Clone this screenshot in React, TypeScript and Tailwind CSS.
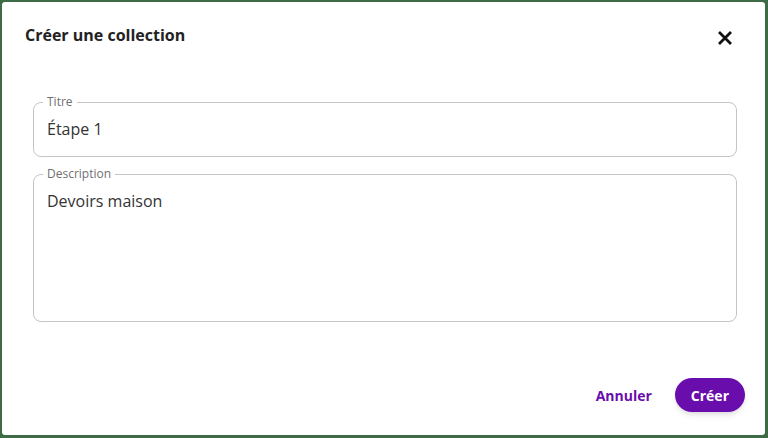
import React from 'react';

interface OutlinedFieldProps {
  label: string;
  value: string;
  bodyClass: string;
}

const OutlinedField: React.FC<OutlinedFieldProps> = ({ label, value, bodyClass }) => {
  return (
    <fieldset className="border border-[#c4c4c4] rounded-lg pl-[9px] pr-[13px] m-0">
      <legend className="px-[4px] text-[12px] leading-4 text-[#707070]">{label}</legend>
      <div className={`pl-[4px] pt-[7px] text-[16px] leading-6 text-[#333333] ${bodyClass}`}>{value}</div>
    </fieldset>
  );
};

const CloseIcon = () => (
  <svg width="16" height="16" viewBox="0 0 16 16" aria-hidden="true">
    <path d="M2 2 14 14M14 2 2 14" stroke="#111111" strokeWidth="2.8" fill="none" />
  </svg>
);

const App: React.FC = () => {
  return (
    <div
      className="w-[768px] h-[438px] bg-[#3d6b45] pt-[2px] pl-[2px] pr-[3px] pb-[3px]"
      style={{ fontFamily: '"Open Sans", "Noto Sans", sans-serif' }}
    >
      <div className="h-full bg-white rounded-[3px] flex flex-col">
        {/* Header */}
        <div className="flex items-start justify-between pl-[23px] pr-[32px] pt-[21px]">
          <h2 className="text-[16px] leading-6 font-bold text-[#222222]">Créer une collection</h2>
          <button className="mt-[7px]" aria-label="Fermer">
            <CloseIcon />
          </button>
        </div>

        {/* Form */}
        <div className="flex flex-col gap-[9px] pl-[31px] pr-[28px] mt-[47px]">
          <OutlinedField label="Titre" value="Étape 1" bodyClass="pb-[15px]" />
          <OutlinedField label="Description" value="Devoirs maison" bodyClass="h-[139px]" />
        </div>

        {/* Actions */}
        <div className="mt-auto flex items-center justify-end gap-[7px] pr-[20px] pb-[23px]">
          <button className="h-[34px] px-4 text-[14px] font-bold text-[#6a0dad] rounded-full">Annuler</button>
          <button className="h-[34px] px-[16px] text-[14px] font-bold text-white bg-[#6a0dad] rounded-full shadow-md">
            Créer
          </button>
        </div>
      </div>
    </div>
  );
};

export default App;
